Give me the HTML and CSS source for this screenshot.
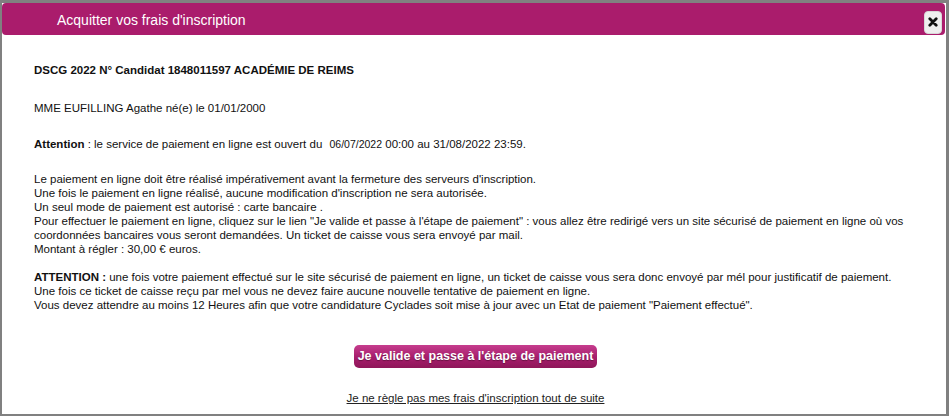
FILE: index.html
```html
<!DOCTYPE html>
<html lang="fr">
<head>
<meta charset="utf-8">
<title>Acquitter vos frais d'inscription</title>
<link rel="stylesheet" href="styles.css">
</head>
<body>
<div class="dialog">
  <div class="titlebar">
    <span class="title">Acquitter vos frais d'inscription</span>
    <button class="close" type="button" aria-label="Fermer">
      <svg width="10" height="10" viewBox="0 0 10 10"><path d="M1.8 1.8 L8.2 8.2 M8.2 1.8 L1.8 8.2" stroke="#111" stroke-width="2.8" stroke-linecap="round"/></svg>
    </button>
  </div>
  <div class="content">
    <p class="b1"><strong>DSCG 2022 N° Candidat 1848011597 ACADÉMIE DE REIMS</strong></p>
    <p class="b2">MME EUFILLING Agathe né(e) le 01/01/2000</p>
    <p class="b3"><strong>Attention</strong> : le service de paiement en ligne est ouvert du <span class="date">06/07/2022</span> 00:00 au 31/08/2022 23:59.</p>
    <p class="b4">Le paiement en ligne doit être réalisé impérativement avant la fermeture des serveurs d'inscription.<br>
Une fois le paiement en ligne réalisé, aucune modification d'inscription ne sera autorisée.<br>
Un seul mode de paiement est autorisé : carte bancaire .<br>
Pour effectuer le paiement en ligne, cliquez sur le lien "Je valide et passe à l'étape de paiement" : vous allez être redirigé vers un site sécurisé de paiement en ligne où vos coordonnées bancaires vous seront demandées. Un ticket de caisse vous sera envoyé par mail.<br>
Montant à régler : 30,00 € euros.</p>
    <p class="b5"><strong>ATTENTION :</strong> une fois votre paiement effectué sur le site sécurisé de paiement en ligne, un ticket de caisse vous sera donc envoyé par mél pour justificatif de paiement.<br>
Une fois ce ticket de caisse reçu par mel vous ne devez faire aucune nouvelle tentative de paiement en ligne.<br>
Vous devez attendre au moins 12 Heures afin que votre candidature Cyclades soit mise à jour avec un Etat de paiement "Paiement effectué".</p>
    <div class="actions">
      <a class="pay" href="#">Je valide et passe à l'étape de paiement</a>
      <a class="later" href="#">Je ne règle pas mes frais d'inscription tout de suite</a>
    </div>
  </div>
</div>
</body>
</html>
```

FILE: styles.css
```css
html, body {
  margin: 0;
  padding: 0;
  background: #ffffff;
}
.dialog {
  box-sizing: border-box;
  width: 949px;
  height: 416px;
  border-style: solid;
  border-color: #808080;
  border-width: 3px 3px 2px 2px;
  background: #fff;
  font-family: "Liberation Sans", Arial, sans-serif;
  color: #111;
  overflow: hidden;
}
.titlebar {
  display: flex;
  align-items: center;
  justify-content: space-between;
  height: 32px;
  margin: 0 1px 0 0;
  padding: 0 3px 0 55px;
  background: #aa1c6c;
  border-radius: 4px;
}
.title {
  color: #fff;
  font-size: 14px;
  padding-top: 1px;
}
.close {
  display: flex;
  align-items: center;
  justify-content: center;
  width: 18px;
  height: 23px;
  padding: 0;
  margin-top: 6px;
  border: 1px solid #d8d8d8;
  border-radius: 4px;
  background: #efefef;
}
.content {
  padding: 28px 20px 0 32px;
  font-size: 11.5px;
  line-height: 14px;
}
.content p {
  margin: 0;
}
.b2 { margin-top: 24px !important; }
.b3 { margin-top: 22px !important; }
.b4 { margin-top: 21px !important; }
.b5 { margin-top: 14px !important; }
.date {
  font-size: 10.5px;
  margin-left: 4px;
}
.actions {
  display: flex;
  flex-direction: column;
  align-items: center;
  padding-right: 9px;
}
.pay {
  margin-top: 33px;
  display: inline-block;
  height: 23px;
  line-height: 23px;
  padding: 0 4px;
  border-radius: 5px;
  background: linear-gradient(#c63d8e, #a51d6b 55%, #8f1659);
  color: #fff;
  font-weight: bold;
  font-size: 12.5px;
  text-decoration: none;
  text-shadow: 0 1px 1px rgba(0,0,0,0.35);
}
.later {
  margin-top: 23px;
  color: #222;
  font-size: 11.5px;
  text-decoration: underline;
}
```
